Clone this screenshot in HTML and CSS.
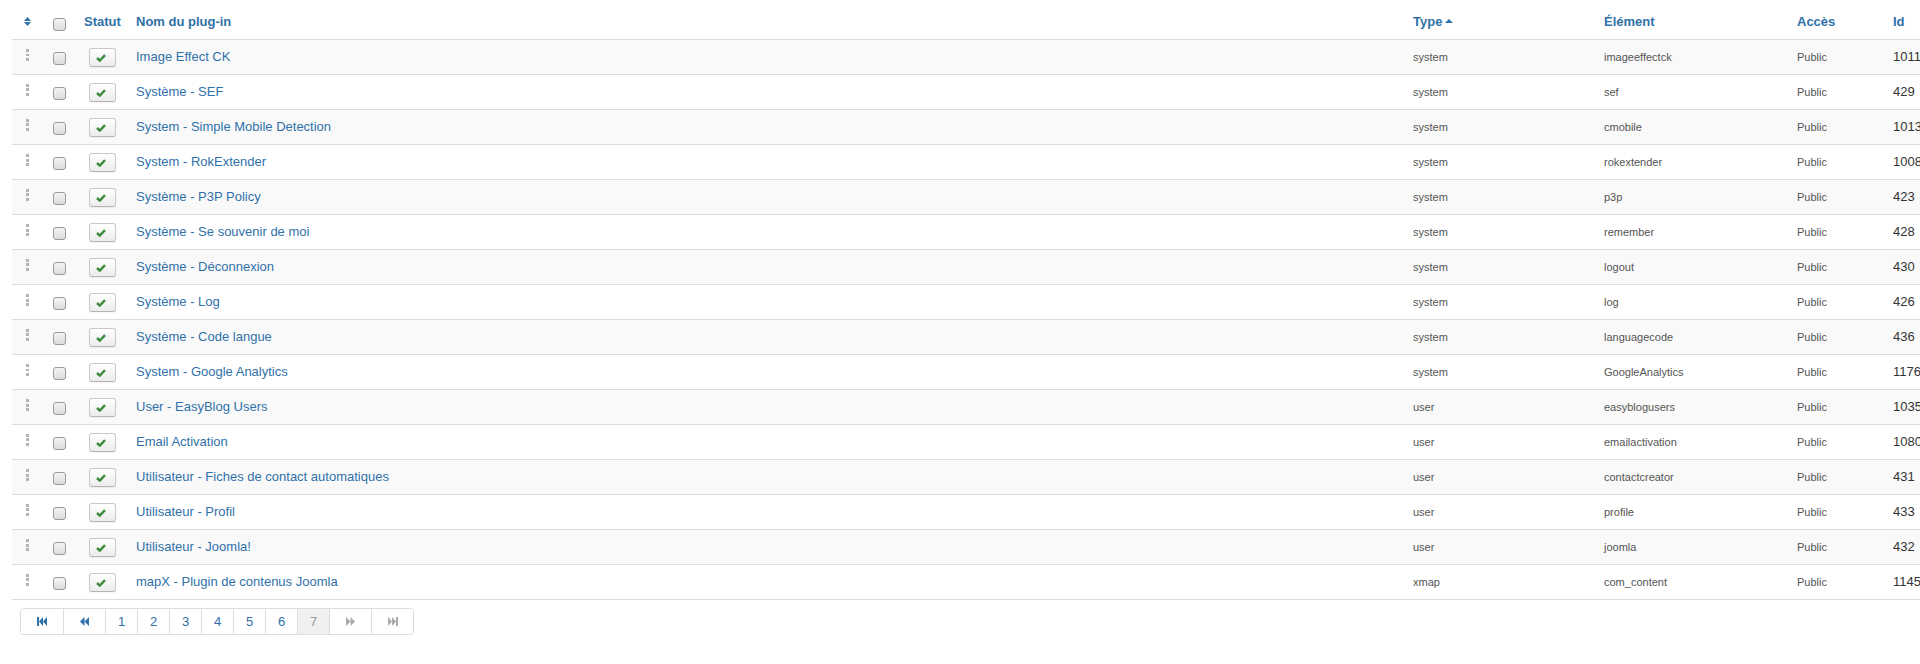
FILE: index.html
```html
<!DOCTYPE html>
<html lang="fr">
<head>
  <meta charset="UTF-8">
  <title>Plug-ins</title>
  <link rel="stylesheet" href="styles.css">
</head>
<body>
  <div class="page">
    <table class="plugins">
      <colgroup>
        <col class="c-order">
        <col class="c-check">
        <col class="c-status">
        <col class="c-name">
        <col class="c-type">
        <col class="c-element">
        <col class="c-access">
        <col class="c-id">
      </colgroup>
      <thead>
        <tr>
          <th class="center">
            <svg class="sort-icon" width="7" height="9" viewBox="0 0 7 9"><path d="M3.5 0 L7 4 H0 Z M0 5 H7 L3.5 9 Z" fill="#3071a9"/></svg>
          </th>
          <th class="center"><span class="checkbox head"></span></th>
          <th class="center"><a href="#">Statut</a></th>
          <th><a href="#">Nom du plug-in</a></th>
          <th><a href="#">Type</a> <svg class="caret" width="8" height="4" viewBox="0 0 8 4"><path d="M4 0 L8 4 H0 Z" fill="#3071a9"/></svg></th>
          <th><a href="#">Élément</a></th>
          <th><a href="#">Accès</a></th>
          <th><a href="#">Id</a></th>
        </tr>
      </thead>
      <tbody>
        <tr>
          <td><span class="handle"></span></td>
          <td><span class="checkbox"></span></td>
          <td><a class="btn-micro" href="#"><svg width="10" height="8" viewBox="0 0 10 8"><path d="M1 4 L3.8 6.6 L9 1.2" fill="none" stroke="#3d8b3d" stroke-width="2.4"/></svg></a></td>
          <td><a href="#">Image Effect CK</a></td>
          <td class="small">system</td>
          <td class="small">imageeffectck</td>
          <td class="small">Public</td>
          <td>1011</td>
        </tr>
        <tr>
          <td><span class="handle"></span></td>
          <td><span class="checkbox"></span></td>
          <td><a class="btn-micro" href="#"><svg width="10" height="8" viewBox="0 0 10 8"><path d="M1 4 L3.8 6.6 L9 1.2" fill="none" stroke="#3d8b3d" stroke-width="2.4"/></svg></a></td>
          <td><a href="#">Système - SEF</a></td>
          <td class="small">system</td>
          <td class="small">sef</td>
          <td class="small">Public</td>
          <td>429</td>
        </tr>
        <tr>
          <td><span class="handle"></span></td>
          <td><span class="checkbox"></span></td>
          <td><a class="btn-micro" href="#"><svg width="10" height="8" viewBox="0 0 10 8"><path d="M1 4 L3.8 6.6 L9 1.2" fill="none" stroke="#3d8b3d" stroke-width="2.4"/></svg></a></td>
          <td><a href="#">System - Simple Mobile Detection</a></td>
          <td class="small">system</td>
          <td class="small">cmobile</td>
          <td class="small">Public</td>
          <td>1013</td>
        </tr>
        <tr>
          <td><span class="handle"></span></td>
          <td><span class="checkbox"></span></td>
          <td><a class="btn-micro" href="#"><svg width="10" height="8" viewBox="0 0 10 8"><path d="M1 4 L3.8 6.6 L9 1.2" fill="none" stroke="#3d8b3d" stroke-width="2.4"/></svg></a></td>
          <td><a href="#">System - RokExtender</a></td>
          <td class="small">system</td>
          <td class="small">rokextender</td>
          <td class="small">Public</td>
          <td>1008</td>
        </tr>
        <tr>
          <td><span class="handle"></span></td>
          <td><span class="checkbox"></span></td>
          <td><a class="btn-micro" href="#"><svg width="10" height="8" viewBox="0 0 10 8"><path d="M1 4 L3.8 6.6 L9 1.2" fill="none" stroke="#3d8b3d" stroke-width="2.4"/></svg></a></td>
          <td><a href="#">Système - P3P Policy</a></td>
          <td class="small">system</td>
          <td class="small">p3p</td>
          <td class="small">Public</td>
          <td>423</td>
        </tr>
        <tr>
          <td><span class="handle"></span></td>
          <td><span class="checkbox"></span></td>
          <td><a class="btn-micro" href="#"><svg width="10" height="8" viewBox="0 0 10 8"><path d="M1 4 L3.8 6.6 L9 1.2" fill="none" stroke="#3d8b3d" stroke-width="2.4"/></svg></a></td>
          <td><a href="#">Système - Se souvenir de moi</a></td>
          <td class="small">system</td>
          <td class="small">remember</td>
          <td class="small">Public</td>
          <td>428</td>
        </tr>
        <tr>
          <td><span class="handle"></span></td>
          <td><span class="checkbox"></span></td>
          <td><a class="btn-micro" href="#"><svg width="10" height="8" viewBox="0 0 10 8"><path d="M1 4 L3.8 6.6 L9 1.2" fill="none" stroke="#3d8b3d" stroke-width="2.4"/></svg></a></td>
          <td><a href="#">Système - Déconnexion</a></td>
          <td class="small">system</td>
          <td class="small">logout</td>
          <td class="small">Public</td>
          <td>430</td>
        </tr>
        <tr>
          <td><span class="handle"></span></td>
          <td><span class="checkbox"></span></td>
          <td><a class="btn-micro" href="#"><svg width="10" height="8" viewBox="0 0 10 8"><path d="M1 4 L3.8 6.6 L9 1.2" fill="none" stroke="#3d8b3d" stroke-width="2.4"/></svg></a></td>
          <td><a href="#">Système - Log</a></td>
          <td class="small">system</td>
          <td class="small">log</td>
          <td class="small">Public</td>
          <td>426</td>
        </tr>
        <tr>
          <td><span class="handle"></span></td>
          <td><span class="checkbox"></span></td>
          <td><a class="btn-micro" href="#"><svg width="10" height="8" viewBox="0 0 10 8"><path d="M1 4 L3.8 6.6 L9 1.2" fill="none" stroke="#3d8b3d" stroke-width="2.4"/></svg></a></td>
          <td><a href="#">Système - Code langue</a></td>
          <td class="small">system</td>
          <td class="small">languagecode</td>
          <td class="small">Public</td>
          <td>436</td>
        </tr>
        <tr>
          <td><span class="handle"></span></td>
          <td><span class="checkbox"></span></td>
          <td><a class="btn-micro" href="#"><svg width="10" height="8" viewBox="0 0 10 8"><path d="M1 4 L3.8 6.6 L9 1.2" fill="none" stroke="#3d8b3d" stroke-width="2.4"/></svg></a></td>
          <td><a href="#">System - Google Analytics</a></td>
          <td class="small">system</td>
          <td class="small">GoogleAnalytics</td>
          <td class="small">Public</td>
          <td>1176</td>
        </tr>
        <tr>
          <td><span class="handle"></span></td>
          <td><span class="checkbox"></span></td>
          <td><a class="btn-micro" href="#"><svg width="10" height="8" viewBox="0 0 10 8"><path d="M1 4 L3.8 6.6 L9 1.2" fill="none" stroke="#3d8b3d" stroke-width="2.4"/></svg></a></td>
          <td><a href="#">User - EasyBlog Users</a></td>
          <td class="small">user</td>
          <td class="small">easyblogusers</td>
          <td class="small">Public</td>
          <td>1035</td>
        </tr>
        <tr>
          <td><span class="handle"></span></td>
          <td><span class="checkbox"></span></td>
          <td><a class="btn-micro" href="#"><svg width="10" height="8" viewBox="0 0 10 8"><path d="M1 4 L3.8 6.6 L9 1.2" fill="none" stroke="#3d8b3d" stroke-width="2.4"/></svg></a></td>
          <td><a href="#">Email Activation</a></td>
          <td class="small">user</td>
          <td class="small">emailactivation</td>
          <td class="small">Public</td>
          <td>1080</td>
        </tr>
        <tr>
          <td><span class="handle"></span></td>
          <td><span class="checkbox"></span></td>
          <td><a class="btn-micro" href="#"><svg width="10" height="8" viewBox="0 0 10 8"><path d="M1 4 L3.8 6.6 L9 1.2" fill="none" stroke="#3d8b3d" stroke-width="2.4"/></svg></a></td>
          <td><a href="#">Utilisateur - Fiches de contact automatiques</a></td>
          <td class="small">user</td>
          <td class="small">contactcreator</td>
          <td class="small">Public</td>
          <td>431</td>
        </tr>
        <tr>
          <td><span class="handle"></span></td>
          <td><span class="checkbox"></span></td>
          <td><a class="btn-micro" href="#"><svg width="10" height="8" viewBox="0 0 10 8"><path d="M1 4 L3.8 6.6 L9 1.2" fill="none" stroke="#3d8b3d" stroke-width="2.4"/></svg></a></td>
          <td><a href="#">Utilisateur - Profil</a></td>
          <td class="small">user</td>
          <td class="small">profile</td>
          <td class="small">Public</td>
          <td>433</td>
        </tr>
        <tr>
          <td><span class="handle"></span></td>
          <td><span class="checkbox"></span></td>
          <td><a class="btn-micro" href="#"><svg width="10" height="8" viewBox="0 0 10 8"><path d="M1 4 L3.8 6.6 L9 1.2" fill="none" stroke="#3d8b3d" stroke-width="2.4"/></svg></a></td>
          <td><a href="#">Utilisateur - Joomla!</a></td>
          <td class="small">user</td>
          <td class="small">joomla</td>
          <td class="small">Public</td>
          <td>432</td>
        </tr>
        <tr>
          <td><span class="handle"></span></td>
          <td><span class="checkbox"></span></td>
          <td><a class="btn-micro" href="#"><svg width="10" height="8" viewBox="0 0 10 8"><path d="M1 4 L3.8 6.6 L9 1.2" fill="none" stroke="#3d8b3d" stroke-width="2.4"/></svg></a></td>
          <td><a href="#">mapX - Plugin de contenus Joomla</a></td>
          <td class="small">xmap</td>
          <td class="small">com_content</td>
          <td class="small">Public</td>
          <td>1145</td>
        </tr>
      </tbody>
    </table>

    <ul class="pagination">
      <li class="wide"><a href="#"><svg width="10" height="9" viewBox="0 0 10 9"><path d="M0 0 H2 V9 H0 Z M2 4.5 L6 0 V9 Z M6 4.5 L10 0 V9 Z" fill="#3071a9"/></svg></a></li>
      <li class="wide"><a href="#"><svg width="9" height="9" viewBox="0 0 9 9"><path d="M0 4.5 L4.5 0 V9 Z M4.5 4.5 L9 0 V9 Z" fill="#3071a9"/></svg></a></li>
      <li><a href="#">1</a></li>
      <li><a href="#">2</a></li>
      <li><a href="#">3</a></li>
      <li><a href="#">4</a></li>
      <li><a href="#">5</a></li>
      <li><a href="#">6</a></li>
      <li class="active"><span>7</span></li>
      <li class="wide disabled"><span><svg width="9" height="9" viewBox="0 0 9 9"><path d="M0 0 L4.5 4.5 L0 9 Z M4.5 0 L9 4.5 L4.5 9 Z" fill="#aaa"/></svg></span></li>
      <li class="wide disabled"><span><svg width="10" height="9" viewBox="0 0 10 9"><path d="M0 0 L4 4.5 L0 9 Z M4 0 L8 4.5 L4 9 Z M8 0 H10 V9 H8 Z" fill="#aaa"/></svg></span></li>
    </ul>
  </div>
</body>
</html>
```

FILE: styles.css
```css
* {
  box-sizing: border-box;
}

html, body {
  margin: 0;
  overflow: hidden;
}

body {
  font-family: "Liberation Sans", Arial, sans-serif;
  font-size: 13px;
  line-height: 18px;
  color: #333;
  background: #fff;
}

a {
  color: #3071a9;
  text-decoration: none;
}

.page {
  padding: 5px 0 0 12px;
}

/* tableau des plug-ins */
.plugins {
  width: 1921px;
  table-layout: fixed;
  border-collapse: collapse;
  border-bottom: 1px solid #ddd;
}

.c-order { width: 30px; }
.c-check { width: 34px; }
.c-status { width: 52px; }
.c-name { width: 1277px; }
.c-type { width: 191px; }
.c-element { width: 193px; }
.c-access { width: 96px; }
.c-id { width: 48px; }

.plugins th,
.plugins td {
  padding: 8px;
  text-align: left;
  vertical-align: top;
  white-space: nowrap;
  overflow: hidden;
}

.plugins th {
  font-weight: bold;
}

.plugins td {
  border-top: 1px solid #ddd;
}

.plugins tbody tr:nth-child(odd) td {
  background: #f9f9f9;
}

.plugins th.center,
.plugins td:nth-child(-n+3) {
  text-align: center;
}

.plugins td.small {
  font-size: 11px;
  color: #555;
}

.sort-icon {
  display: block;
  margin: 4px auto 0;
}

.caret {
  vertical-align: 3px;
  margin-left: -1px;
}

.handle {
  display: block;
  width: 3px;
  height: 12px;
  margin: 1px auto 0;
  background: linear-gradient(#b3b3b3 0 3px, transparent 3px 4.5px, #b3b3b3 4.5px 7.5px, transparent 7.5px 9px, #b3b3b3 9px 12px);
}

.checkbox {
  display: block;
  width: 13px;
  height: 13px;
  margin: 4px auto 0;
  border: 1px solid #9a9a9a;
  border-radius: 3px;
  background: linear-gradient(#f4f4f4, #dcdcdc);
}

.checkbox.head {
  margin-top: 5px;
}

.btn-micro {
  display: flex;
  align-items: center;
  justify-content: center;
  width: 27px;
  height: 19px;
  margin: 0 auto -1px;
  border: 1px solid #c8c8c8;
  border-bottom-color: #b5b5b5;
  border-radius: 3px;
  background: linear-gradient(#fff, #ececec);
  box-shadow: 0 1px 1px rgba(0, 0, 0, 0.05);
}

.btn-micro svg {
  margin-left: -2px;
}

/* pagination */
.pagination {
  display: inline-flex;
  list-style: none;
  margin: 8px 0 0 8px;
  padding: 0;
  border: 1px solid #ddd;
  border-radius: 4px;
  box-shadow: 0 1px 2px rgba(0, 0, 0, 0.06);
  overflow: hidden;
}

.pagination li {
  width: 32px;
  border-left: 1px solid #ddd;
}

.pagination li:first-child {
  border-left: none;
  width: 42px;
}

.pagination li.wide {
  width: 42px;
}

.pagination a,
.pagination span {
  display: flex;
  align-items: center;
  justify-content: center;
  height: 25px;
  font-size: 13px;
  color: #3071a9;
  background: #fff;
}

.pagination .active span {
  background: #f0f0f0;
  color: #999;
}

.pagination .disabled span {
  color: #aaa;
}
```
